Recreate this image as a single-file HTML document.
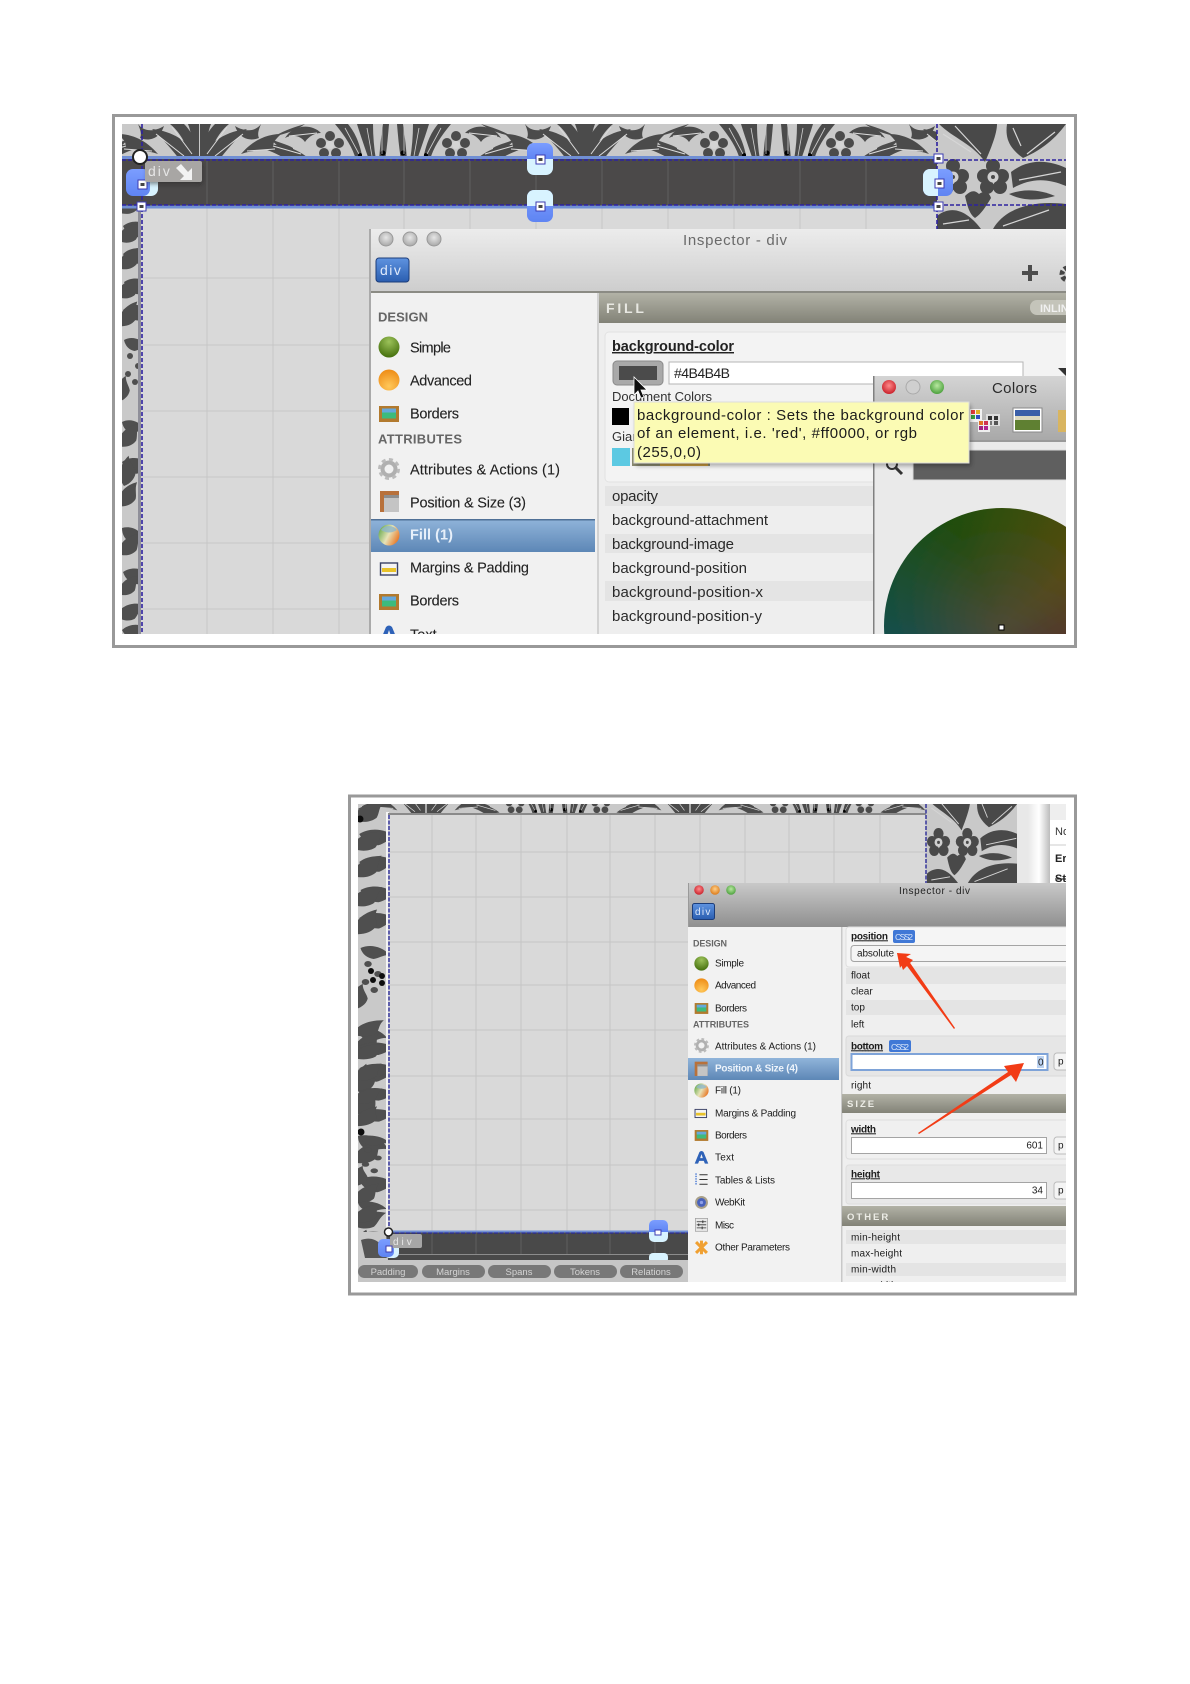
<!DOCTYPE html>
<html><head><meta charset="utf-8"><title>Inspector</title>
<style>
html,body{margin:0;padding:0;background:#fff;width:1190px;height:1684px;overflow:hidden}
svg{display:block;position:absolute;left:0;top:0}
text{font-family:"Liberation Sans",sans-serif;fill:#1c1c1c}
.s{font-size:14.5px;fill:#222;stroke:#222;stroke-width:.1px;transform:translateY(-1.5px)}
.h{font-size:13px;font-weight:bold;fill:#666;transform:translateY(-1.5px)}
.r{font-size:15px;fill:#2a2a2a;transform:translateY(-1px)}
.t{font-size:10px;fill:#1c1c1c;transform:translateY(-.7px)}
.th{font-size:9px;font-weight:bold;fill:#666;transform:translateY(-.7px)}
.u{text-decoration:underline;font-weight:bold}
</style></head><body>
<svg width="1190" height="1684" viewBox="0 0 1190 1684" xmlns="http://www.w3.org/2000/svg">
<defs>
<filter id="bl" x="0" y="0" width="100%" height="100%"><feGaussianBlur stdDeviation="0.38"/></filter>
<filter id="sh" x="-10%" y="-20%" width="120%" height="150%"><feGaussianBlur stdDeviation="2"/></filter>
<clipPath id="c1"><rect x="122" y="124" width="944" height="510"/></clipPath>
<clipPath id="c2"><rect x="358" y="804" width="708" height="478"/></clipPath>
<clipPath id="ins2"><rect x="688" y="883" width="378" height="399"/></clipPath>
<clipPath id="rd1"><rect x="937" y="124" width="129" height="105"/></clipPath>
<clipPath id="rd2"><rect x="927" y="804" width="90" height="80"/></clipPath>
<linearGradient id="tb1" x1="0" y1="0" x2="0" y2="1"><stop offset="0" stop-color="#ececec"/><stop offset="1" stop-color="#cdcdcd"/></linearGradient>
<linearGradient id="tb2" x1="0" y1="0" x2="0" y2="1"><stop offset="0" stop-color="#c9c9c9"/><stop offset="1" stop-color="#8f8f8f"/></linearGradient>
<linearGradient id="hd" x1="0" y1="0" x2="0" y2="1"><stop offset="0" stop-color="#b2b2a6"/><stop offset="1" stop-color="#828277"/></linearGradient>
<linearGradient id="sel" x1="0" y1="0" x2="0" y2="1"><stop offset="0" stop-color="#90b4da"/><stop offset="1" stop-color="#5d87b6"/></linearGradient>
<linearGradient id="btn" x1="0" y1="0" x2="0" y2="1"><stop offset="0" stop-color="#5f93e0"/><stop offset="1" stop-color="#2a5eb0"/></linearGradient>
<linearGradient id="hb" x1="0" y1="0" x2="0" y2="1"><stop offset="0" stop-color="#7b9dff"/><stop offset="1" stop-color="#5f84f2"/></linearGradient>
<linearGradient id="col" x1="0" y1="0" x2="0" y2="1"><stop offset="0" stop-color="#d4d4d4"/><stop offset="1" stop-color="#a8a8a8"/></linearGradient>
<linearGradient id="sc" x1="0" y1="0" x2="1" y2="0"><stop offset="0" stop-color="#e8e8e8"/><stop offset=".5" stop-color="#ffffff"/><stop offset="1" stop-color="#bcbcbc"/></linearGradient>
<radialGradient id="gb" cx=".5" cy=".25" r=".8"><stop offset="0" stop-color="#9cc25a"/><stop offset="1" stop-color="#3f6a08"/></radialGradient>
<radialGradient id="ob" cx=".5" cy=".8" r=".8"><stop offset="0" stop-color="#ffc85a"/><stop offset="1" stop-color="#ee8c16"/></radialGradient>
<linearGradient id="fb" x1="0" y1=".2" x2="1" y2=".7"><stop offset="0" stop-color="#63a84a"/><stop offset=".5" stop-color="#e7e3b8"/><stop offset="1" stop-color="#e8721e"/></linearGradient>
<radialGradient id="rd" cx=".5" cy=".4" r=".6"><stop offset="0" stop-color="#ff8a8a"/><stop offset="1" stop-color="#c9202a"/></radialGradient>
<radialGradient id="or" cx=".5" cy=".4" r=".6"><stop offset="0" stop-color="#ffd08a"/><stop offset="1" stop-color="#dc7a18"/></radialGradient>
<radialGradient id="gr" cx=".5" cy=".4" r=".6"><stop offset="0" stop-color="#b8e8a0"/><stop offset="1" stop-color="#4ba03c"/></radialGradient>
<radialGradient id="gy" cx=".5" cy=".4" r=".6"><stop offset="0" stop-color="#e6e6e6"/><stop offset="1" stop-color="#a8a8a8"/></radialGradient>

<g id="half">
 <path d="M4,0C5,12 6,24 8,36L14,36C13,24 12,12 10,0Z"/>
 <path d="M20,0C20,12 19,24 17,36L24,36C28,24 33,10 36,0Z"/>
 <path d="M45,0C37,10 33,20 30,36L37,36C40,24 48,12 58,0Z"/>
 <path d="M72,9C82,-1 100,1 108,14C100,10 92,12 88,18C84,12 78,9 72,9Z"/>
 <path d="M86,33C102,21 118,19 136,22C124,27 116,29 106,36Z"/>
 <path d="M100,24C106,20 114,19 122,15C116,23 108,27 100,28Z"/>
 <path d="M88,0C98,3 108,6 118,12C108,10 98,7 88,0Z"/>
 <path d="M132,0C138,8 148,8 158,2C154,14 144,18 134,14C136,10 134,5 132,0Z"/>
 <path d="M112,10C126,10 140,16 152,30C140,26 128,26 118,24C122,20 118,16 112,10Z"/>
 <path d="M193,36C186,22 172,8 146,5C158,16 168,28 174,36Z"/>
 <path d="M193,36C192,22 188,10 178,0L164,0C176,10 182,24 184,36Z"/>
 <path d="M193,0L193,36L187,36C187,22 186,10 182,0Z"/>
 <circle cx="63" cy="12" r="5"/><circle cx="54" cy="19" r="5"/><circle cx="72" cy="19" r="5"/><circle cx="57" cy="29" r="5"/><circle cx="69" cy="29" r="5"/>
 <circle cx="63" cy="21" r="4" fill="#d4d4d4"/>
 <circle cx="10" cy="29" r="2.500" fill="#000"/>
 <circle cx="33" cy="31" r="2" fill="#000"/>
 <path d="M150,10L178,32M166,3L186,30M118,25L146,27M92,30L120,22M76,9L104,12" stroke="#dcdcdc" stroke-width="1" fill="none"/>
 <path d="M11,2L11,30M26,4L21,32M48,4L34,30" stroke="#cfcfcf" stroke-width=".8" fill="none"/>
</g>
<g id="dm" fill="#4c4c4c"><use href="#half"/><use href="#half" transform="scale(-1,1)"/></g>
<path id="lf" d="M0,0C6,-9 18,-12 30,-6C24,-3 22,3 18,6C12,8 5,6 0,0Z"/>
<g id="strip" fill="#4f4f4f">
 <use href="#lf" transform="translate(-4,6) rotate(-25)"/><use href="#lf" transform="translate(1,20) rotate(18)"/>
 <use href="#lf" transform="translate(-5,34) rotate(-20)"/><use href="#lf" transform="translate(1,48) rotate(12)"/>
 <use href="#lf" transform="translate(-4,62) rotate(-30)"/><use href="#lf" transform="translate(2,76) rotate(22)"/>
 <use href="#lf" transform="translate(-6,90) rotate(-22)"/><use href="#lf" transform="translate(1,104) rotate(15)"/>
 <use href="#lf" transform="translate(-3,120) rotate(-42)"/><use href="#lf" transform="translate(2,134) rotate(28) scale(.8)"/>
 <circle cx="8" cy="150" r="3"/><circle cx="16" cy="160" r="3"/><circle cx="6" cy="168" r="3"/><circle cx="13" cy="176" r="3"/>
 <use href="#lf" transform="translate(-5,196) rotate(-60) scale(.9)"/><use href="#lf" transform="translate(0,216) rotate(30) scale(.8)"/>
 <use href="#lf" transform="translate(-4,240) rotate(-35)"/><use href="#lf" transform="translate(0,256) rotate(20)"/>
 <use href="#lf" transform="translate(2,280) rotate(-70)"/><use href="#lf" transform="translate(-4,300) rotate(-40)"/><use href="#lf" transform="translate(0,322) rotate(40) scale(.9)"/>
 <use href="#lf" transform="translate(-4,348) rotate(-30)"/><use href="#lf" transform="translate(1,366) rotate(22)"/>
 <use href="#lf" transform="translate(-4,388) rotate(-30) scale(.9)"/><use href="#lf" transform="translate(-6,410) rotate(-10)"/><use href="#lf" transform="translate(0,424) rotate(14)"/>
</g>
<g id="rdm" fill="#4a4a4a">
 <path d="M2,0C16,14 36,20 48,38C56,20 60,8 60,0Z"/>
 <path d="M70,0C68,14 72,24 86,34C100,28 116,18 129,0Z"/>
 <circle cx="16" cy="42" r="7"/><circle cx="7" cy="52" r="7"/><circle cx="25" cy="52" r="7"/><circle cx="10" cy="63" r="7"/><circle cx="23" cy="63" r="7"/><circle cx="16" cy="53" r="5.500" fill="#cfcfcf"/><circle cx="16" cy="53" r="2" fill="#4a4a4a"/>
 <circle cx="56" cy="42" r="7"/><circle cx="47" cy="52" r="7"/><circle cx="65" cy="52" r="7"/><circle cx="50" cy="63" r="7"/><circle cx="63" cy="63" r="7"/><circle cx="56" cy="53" r="5.500" fill="#cfcfcf"/><circle cx="56" cy="53" r="2" fill="#4a4a4a"/>
 <path d="M74,48C92,34 112,36 129,44V62C110,54 94,54 76,64Z"/>
 <path d="M28,72C34,66 38,66 42,70C48,66 52,68 54,74C48,84 44,90 38,94C32,90 30,80 28,72Z"/>
 <path d="M0,92C18,78 34,92 44,105H0Z"/><path d="M56,105C68,84 96,76 129,80V105Z"/>
 <path d="M72,70C88,64 104,66 118,72C104,76 88,78 72,70Z"/>
 <path d="M6,10L34,28M18,2L44,30M90,30L118,8M84,22L76,4M82,56L124,48M66,102L112,86M6,100L32,96" stroke="#d6d6d6" stroke-width="1.200" fill="none"/>
</g>

<g id="i-green"><circle cx="11" cy="11" r="10.500" fill="url(#gb)"/></g>
<g id="i-orange"><circle cx="11" cy="11" r="10.500" fill="url(#ob)"/></g>
<g id="i-frame"><rect x="1" y="3" width="20" height="16" fill="#b27a2e"/><rect x="4" y="5.500" width="14" height="10" fill="#3dbb7c"/><rect x="4" y="5.500" width="14" height="4" fill="#66a8dc"/></g>
<g id="i-gear"><circle cx="11" cy="11" r="6.500" fill="none" stroke="#b0b0b0" stroke-width="4"/><circle cx="11" cy="11" r="9.500" fill="none" stroke="#bbb" stroke-width="3" stroke-dasharray="4 3.400"/></g>
<g id="i-pos"><rect x="1" y="1" width="19" height="21" fill="#b8713a"/><rect x="5" y="5" width="15" height="17" fill="#c4c4c4"/><rect x="5" y="5" width="15" height="3" fill="#8e8e8e"/></g>
<g id="i-fill"><circle cx="11" cy="11" r="10.500" fill="url(#fb)"/><path d="M3,6A10,10 0 0 1 19,6Q11,11 3,6Z" fill="#8fb6c8" opacity=".8"/></g>
<g id="i-marg"><rect x="1.500" y="5" width="17" height="12" fill="#f4f4f4" stroke="#3b4266" stroke-width="1.400"/><rect x="3" y="10" width="14" height="4" fill="#e8c22a"/></g>
<g id="i-text"><path d="M1,20L8,3Q11,0 14,3L21,20L16,20L14.400,16L7.600,16L6,20ZM9,12L13,12L11,6Z" fill="#2f62b8" fill-rule="evenodd"/></g>
<g id="i-list"><path d="M8,4H20M8,11H20M8,18H20" stroke="#333" stroke-width="1.400"/><path d="M3,2V20" stroke="#5a86d8" stroke-width="2.400" stroke-dasharray="2 1.600"/></g>
<g id="i-web"><circle cx="11" cy="11" r="9.500" fill="#a9a089"/><circle cx="11" cy="11" r="6.500" fill="#4a62bc"/><circle cx="11" cy="11" r="2.400" fill="#8fa0e8"/></g>
<g id="i-misc"><rect x="2" y="2" width="18" height="19" fill="#e8e8e8" stroke="#9a9a9a"/><path d="M4,7H18M4,11.500H18M4,16H18" stroke="#333" stroke-width="1.200"/><path d="M13,5V9M7,9.500V13.500M12,14V18" stroke="#333" stroke-width="1.400"/></g>
<g id="i-other"><path d="M3,3L19,19M19,3L3,19M11,1V21" stroke="#f0a030" stroke-width="4.400"/></g>
<g id="h1"><rect x="0" y="0" width="9" height="9" fill="#fff" stroke="#3b3bb0" stroke-width="1"/><rect x="2.500" y="3" width="4" height="3" fill="#444"/></g>
</defs>

<!-- FRAME 1 -->
<rect x="113.500" y="115.500" width="962" height="531" fill="#fff" stroke="#999" stroke-width="3"/>
<g clip-path="url(#c1)"><g filter="url(#bl)">
 <rect x="122" y="124" width="944" height="510" fill="#c9c9c9"/>
 <use href="#dm" transform="translate(393,124)"/>
 <use href="#dm" transform="translate(777,124)"/>
 <use href="#dm" transform="translate(6,124)"/>
 <rect x="937" y="124" width="129" height="105" fill="#c9c9c9"/>
 <g clip-path="url(#rd1)"><use href="#rdm" transform="translate(937,124)"/></g>
 <use href="#strip" transform="translate(122,206)"/>
 <rect x="138" y="206" width="4" height="428" fill="#8f8f99"/>
 <rect x="141" y="206" width="796" height="428" fill="#d9d9d9"/>
 <path d="M141,278H937M141,345H937M141,411H937M141,477H937M141,543H937M141,609H937M207,206V634M273,206V634M339,206V634M404,206V634M470,206V634M536,206V634M602,206V634M668,206V634M734,206V634M800,206V634M866,206V634" stroke="#c6c6c6" stroke-width="1" fill="none"/>
 <rect x="122" y="158" width="815" height="48" fill="#4b4a49"/>
 <path d="M207,160V206M273,160V206M339,160V206M404,160V206M470,160V206M536,160V206M602,160V206M668,160V206M734,160V206M800,160V206M866,160V206" stroke="#5e5e5e" stroke-width="1"/>
 <path d="M122,157.500H937M122,207H937" stroke="#6f8fd4" stroke-width="3"/>
 <path d="M122,160H1066M122,205H1066M142,124V634M937,124V229" stroke="#2d20a0" stroke-width="1.600" stroke-dasharray="4 2" fill="none"/>
</g>
 <!-- handles -->
 <g filter="url(#bl)">
 <rect x="134" y="170" width="24" height="26" rx="7" fill="#d8f3ff"/>
 <rect x="126" y="169" width="24" height="27" rx="7" fill="url(#hb)"/>
 <rect x="527" y="143" width="26" height="32" rx="7" fill="#d8f3ff"/><path d="M527,150a7,7 0 0 1 7,-7h12a7,7 0 0 1 7,7v9h-26z" fill="url(#hb)"/>
 <rect x="527" y="190" width="26" height="32" rx="7" fill="url(#hb)"/><path d="M527,197a7,7 0 0 1 7,-7h12a7,7 0 0 1 7,7v9h-26z" fill="#d8f3ff"/>
 <rect x="923" y="169" width="30" height="27" rx="7" fill="url(#hb)"/><path d="M938,169h-8a7,7 0 0 0 -7,7v13a7,7 0 0 0 7,7h8z" fill="#d8f3ff"/>
 <use href="#h1" transform="translate(138,180)"/><use href="#h1" transform="translate(137,202)"/><use href="#h1" transform="translate(536,155)"/><use href="#h1" transform="translate(536,202)"/><use href="#h1" transform="translate(934,154)"/><use href="#h1" transform="translate(934,202)"/><use href="#h1" transform="translate(935,179)"/>
 <rect x="147" y="164" width="55" height="20" rx="2" fill="#222" opacity=".5" filter="url(#sh)"/>
 <rect x="145" y="161" width="57" height="21" rx="2" fill="#a8a6a4"/>
 <text x="148" y="176" style="font-size:14px;letter-spacing:2px;fill:#e6e6e6">div</text>
 <path d="M192,180L180,180L184,176L176,168L181,164L188,172L192,168Z" fill="#f2f2f2"/>
 <circle cx="140" cy="157" r="7" fill="#fff" stroke="#222" stroke-width="2"/>

 <!-- inspector -->
 <rect x="371" y="229" width="700" height="405" fill="#eeeeee"/>
 <rect x="371" y="229" width="700" height="63" fill="url(#tb1)"/>
 <rect x="369" y="229" width="2" height="405" fill="#aaa"/>
 <rect x="371" y="291" width="700" height="2" fill="#8b8b84"/>
 <circle cx="386" cy="239" r="7" fill="url(#gy)" stroke="#999"/><circle cx="410" cy="239" r="7" fill="url(#gy)" stroke="#999"/><circle cx="434" cy="239" r="7" fill="url(#gy)" stroke="#999"/>
 <rect x="376" y="258" width="33" height="24" rx="3" fill="url(#btn)" stroke="#1e3d7a"/>
 <text x="380" y="275" style="font-size:14px;letter-spacing:1.500px;fill:#dfe9fb">div</text>
 <text x="683" y="245" textLength="104" style="font-size:15px;fill:#6a6a6a">Inspector - div</text>
 <path d="M1022,273H1038M1030,265V281" stroke="#4e4e4e" stroke-width="4"/>
 <circle cx="1068" cy="274" r="6" fill="none" stroke="#444" stroke-width="5" stroke-dasharray="4 2"/>

 <rect x="371" y="293" width="226" height="341" fill="#f1f1f1"/>
 <rect x="597" y="293" width="2" height="341" fill="#d2d2d2"/>
 <rect x="599" y="293" width="470" height="30" fill="url(#hd)"/>
 <text x="606" y="313" style="font-size:14px;font-weight:bold;letter-spacing:2.800px;fill:#e8e8e2">FILL</text>
 <rect x="1030" y="300" width="45" height="15" rx="7" fill="#c4c4ba"/>
 <text x="1040" y="312" style="font-size:11px;font-weight:bold;fill:#f0f0f0">INLINE</text>

 <text x="378" y="323" class="h" textLength="50">DESIGN</text>
 <use href="#i-green" transform="translate(378,336)"/><text x="410" y="354" class="s" textLength="41">Simple</text>
 <use href="#i-orange" transform="translate(378,369)"/><text x="410" y="387" class="s" textLength="62">Advanced</text>
 <use href="#i-frame" transform="translate(378,403)"/><text x="410" y="420" class="s" textLength="49">Borders</text>
 <text x="378" y="445" class="h" textLength="84">ATTRIBUTES</text>
 <use href="#i-gear" transform="translate(378,458)"/><text x="410" y="476" class="s" textLength="150">Attributes &amp; Actions (1)</text>
 <use href="#i-pos" transform="translate(379,490)"/><text x="410" y="509" class="s" textLength="116">Position &amp; Size (3)</text>
 <rect x="371" y="519" width="224" height="33" fill="url(#sel)"/><rect x="371" y="519" width="224" height="1.500" fill="#4f6f96"/>
 <use href="#i-fill" transform="translate(378,524)"/><text x="410" y="541" class="s" style="font-weight:bold;fill:#e8f0fa;stroke:none" textLength="43">Fill (1)</text>
 <use href="#i-marg" transform="translate(379,558)"/><text x="410" y="574" class="s" textLength="119">Margins &amp; Padding</text>
 <use href="#i-frame" transform="translate(378,591)"/><text x="410" y="607" class="s" textLength="49">Borders</text>
 <use href="#i-text" transform="translate(378,624)"/><text x="410" y="641" class="s">Text</text>

 <!-- fill group -->
 <rect x="605" y="332" width="470" height="150" rx="4" fill="#f3f3f3" stroke="#e2e2e2"/>
 <text x="612" y="351" style="font-size:14.500px;fill:#222" class="u" textLength="122">background-color</text>
 <rect x="613" y="361" width="50" height="24" rx="4" fill="#a9a9a9" stroke="#8a8a8a"/>
 <rect x="619" y="366" width="38" height="14" fill="#4b4b4b"/>
 <rect x="669" y="362" width="354" height="22" fill="#fff" stroke="#b4b4b4"/>
 <text x="674" y="378" style="font-size:14px;fill:#222" textLength="56">#4B4B4B</text>
 <path d="M1058,368H1068L1068,378Z" fill="#333"/>
 <text x="612" y="401" style="font-size:13px;fill:#333" textLength="100">Document Colors</text>
 <rect x="612" y="408" width="17" height="17" fill="#000"/>
 <text x="612" y="441" style="font-size:13px;fill:#333">Gian</text>
 <rect x="612" y="448" width="18" height="18" fill="#5cc9e2"/>
 <rect x="632" y="448" width="78" height="18" fill="#8a8a70"/><rect x="660" y="458" width="48" height="8" fill="#c89a3c"/>

 <rect x="605" y="486" width="268" height="148" fill="#eeeeee"/>
 <rect x="605" y="486" width="268" height="20" fill="#e4e4e4"/>
 <rect x="605" y="534" width="268" height="19" fill="#e4e4e4"/>
 <rect x="605" y="581" width="268" height="20" fill="#e4e4e4"/>
 <text x="612" y="502" class="r" textLength="46">opacity</text>
 <text x="612" y="526" class="r" textLength="156">background-attachment</text>
 <text x="612" y="550" class="r" textLength="122">background-image</text>
 <text x="612" y="574" class="r" textLength="135">background-position</text>
 <text x="612" y="598" class="r" textLength="151">background-position-x</text>
 <text x="612" y="622" class="r" textLength="150">background-position-y</text>
 <text x="612" y="646" class="r">background-repeat</text>

 <!-- colors window -->
 <rect x="873" y="376" width="200" height="258" fill="#eaeaea"/>
 <rect x="873" y="376" width="200" height="65" fill="url(#col)"/>
 <rect x="873" y="440" width="200" height="2" fill="#999"/>
 <rect x="873" y="376" width="1.500" height="258" fill="#808080"/>
 <circle cx="889" cy="387" r="7" fill="url(#rd)"/><circle cx="913" cy="387" r="7" fill="#cfcfcf" stroke="#aaa"/><circle cx="937" cy="387" r="7" fill="url(#gr)"/>
 <text x="992" y="393" style="font-size:15px;fill:#2c2c2c" textLength="45">Colors</text>
 <rect x="970" y="409" width="12" height="13" fill="#f2f2f2"/>
 <rect x="971" y="410" width="4" height="4" fill="#e53b3b"/><rect x="976" y="410" width="4" height="4" fill="#e0b020"/><rect x="971" y="415" width="4" height="4" fill="#3aa040"/><rect x="976" y="415" width="4" height="4" fill="#3050c0"/>
 <rect x="986" y="414" width="14" height="12" fill="#ddd"/><rect x="988" y="416" width="4" height="4" fill="#333"/><rect x="994" y="416" width="4" height="4" fill="#333"/><rect x="988" y="421" width="4" height="4" fill="#777"/><rect x="994" y="421" width="4" height="4" fill="#555"/>
 <rect x="978" y="420" width="12" height="12" fill="#eee"/><rect x="979" y="421" width="4" height="4" fill="#e07020"/><rect x="984" y="421" width="4" height="4" fill="#d03050"/><rect x="979" y="426" width="4" height="4" fill="#a02080"/><rect x="984" y="426" width="4" height="4" fill="#b02090"/>
 <rect x="1013" y="408" width="29" height="24" fill="#fff" stroke="#888"/><rect x="1015" y="410" width="25" height="10" fill="#3a5fa8"/><rect x="1015" y="416" width="25" height="4" fill="#dcd8c0"/><rect x="1015" y="420" width="25" height="10" fill="#5f8030"/>
 <rect x="1058" y="410" width="12" height="22" fill="#d9b560"/>
 <rect x="913" y="450" width="155" height="30" fill="#5e5e5e" stroke="#dadada"/>
 <circle cx="892" cy="464" r="5" fill="none" stroke="#333" stroke-width="2"/><path d="M896,468L902,474" stroke="#333" stroke-width="3"/>
 <foreignObject x="884" y="508" width="236" height="236"><div xmlns="http://www.w3.org/1999/xhtml" style="width:236px;height:236px;border-radius:50%;background:radial-gradient(circle,#4c4a34 0%,rgba(76,74,52,.35) 55%,rgba(76,74,52,0) 100%),conic-gradient(#2a5000 0deg,#5c4c00 50deg,#5c3810 75deg,#5a2020 100deg,#4a2040 180deg,#003a5c 240deg,#00505a 258deg,#0a5030 295deg,#124e00 335deg,#2a5000 360deg)"></div></foreignObject>
 <rect x="999" y="625" width="5" height="5" fill="#fff" stroke="#000"/>

 <!-- tooltip -->
 <rect x="636" y="405" width="335" height="61" fill="#000" opacity=".3" filter="url(#sh)"/>
 <rect x="634" y="402" width="335" height="61" fill="#fbfbb4" stroke="#ddd"/>
 <text x="637" y="420" style="font-size:15px;fill:#1a1a1a" textLength="327">background-color : Sets the background color</text>
 <text x="637" y="438" style="font-size:15px;fill:#1a1a1a" textLength="280">of an element, i.e. 'red', #ff0000, or rgb</text>
 <text x="637" y="457" style="font-size:15px;fill:#1a1a1a" textLength="64">(255,0,0)</text>
 <path d="M634,377L634,395L638,391L641,398L644,397L641,390L647,390Z" fill="#111" stroke="#fff" stroke-width=".8"/>
 </g>
</g>

<!-- FRAME 2 -->
<rect x="349.500" y="796" width="726" height="498" fill="#fff" stroke="#999" stroke-width="3"/>
<g clip-path="url(#c2)"><g filter="url(#bl)">
 <rect x="358" y="804" width="708" height="478" fill="#c9c9c9"/>
 <use href="#dm" transform="translate(558,790) scale(.68)"/>
 <use href="#dm" transform="translate(822,790) scale(.68)"/>
 <use href="#dm" transform="translate(294,790) scale(.68)"/>
 <rect x="927" y="804" width="90" height="80" fill="#c9c9c9"/>
 <g clip-path="url(#rd2)"><use href="#rdm" transform="translate(927,800) scale(.72,.8)"/></g>
 <g transform="translate(358,814) scale(1.250,1)"><use href="#strip"/></g>
 <g transform="translate(358,1030) scale(1.250,.8)"><use href="#strip"/></g>
 <circle cx="360" cy="819" r="3.500" fill="#111"/><circle cx="361" cy="1132" r="3.500" fill="#111"/>
 <circle cx="371" cy="971" r="3" fill="#111"/><circle cx="373" cy="980" r="3" fill="#111"/><circle cx="382" cy="976" r="3" fill="#111"/><circle cx="382" cy="983" r="3" fill="#111"/>
 <rect x="386" y="812" width="3" height="420" fill="#f4f4f4"/>
 <rect x="388" y="815" width="538" height="417" fill="#d9d9d9"/>
 <rect x="388" y="813" width="538" height="2" fill="#8a8a8a"/>
 <path d="M388,852H926M388,897H926M388,942H926M388,985H926M388,1030H926M388,1076H926M388,1119H926M388,1165H926M388,1210H926M432,815V1232M476,815V1232M521,815V1232M567,815V1232M610,815V1232M655,815V1232M700,815V1232M745,815V1232M789,815V1232M834,815V1232M880,815V1232" stroke="#c5c5c5" stroke-width="1" fill="none"/>
 <path d="M389,815V1232M926,804V884" stroke="#2a2a98" stroke-width="1.400" stroke-dasharray="4 1.500" fill="none"/>
 <rect x="1017" y="804" width="11" height="80" fill="#e8e8e8"/>
 <rect x="1028" y="804" width="22" height="80" fill="url(#sc)"/>
 <rect x="1050" y="804" width="16" height="80" fill="#fff"/>
 <rect x="1050" y="804" width="16" height="16" fill="#eeeeee"/>
 <path d="M1050,845H1066" stroke="#ccc"/>
 <text x="1055" y="835" style="font-size:11px;fill:#333">No</text>
 <text x="1055" y="862" style="font-size:11px;font-weight:bold;fill:#222">Er</text>
 <text x="1055" y="882" style="font-size:11px;font-weight:bold;fill:#222;text-decoration:line-through">St</text>

 <!-- dark bar -->
 <rect x="358" y="1232" width="330" height="28" fill="#4a4a4a"/>
 <path d="M358,1254.500H688" stroke="#8c8c8c"/>
 <path d="M432,1233V1254M476,1233V1254M521,1233V1254M567,1233V1254M610,1233V1254M655,1233V1254" stroke="#5e5e5e"/>
 <path d="M389,1231.500H688" stroke="#6f8fd4" stroke-width="2"/>
 <path d="M362,1233H688" stroke="#2a2a98" stroke-dasharray="4 1.500" stroke-width="1.200"/>
 <path d="M358,1232L386,1232L388,1260H358Z" fill="#c9c9c9"/>
 <path d="M361,1240C372,1236 382,1240 388,1258L365,1258Z" fill="#555"/>
 <rect x="384" y="1240" width="15" height="18" rx="5" fill="#d8f3ff"/>
 <rect x="378" y="1239" width="16" height="18" rx="5" fill="url(#hb)"/>
 <rect x="390" y="1234" width="32" height="14" rx="2" fill="#a6a6a6"/>
 <text x="393" y="1245" style="font-size:10px;letter-spacing:3px;fill:#e8e8e8">div</text>
 <rect x="386" y="1246" width="6" height="6" fill="#fff" stroke="#3b3bb0"/>
 <circle cx="388.500" cy="1232" r="4" fill="#fff" stroke="#222" stroke-width="1.500"/>
 <rect x="649" y="1220" width="19" height="22" rx="5" fill="#d8f3ff"/><path d="M649,1225a5,5 0 0 1 5,-5h9a5,5 0 0 1 5,5v7h-19z" fill="url(#hb)"/>
 <rect x="655" y="1230" width="6" height="5" fill="#fff" stroke="#3b3bb0"/>
 <rect x="649" y="1253" width="19" height="10" rx="4" fill="#d8f3ff"/>
 <!-- tabs -->
 <rect x="358" y="1260" width="330" height="22" fill="#c6c6c6"/>
 <g fill="#787878">
  <rect x="358" y="1265" width="60" height="13" rx="6.500"/><rect x="422" y="1265" width="63" height="13" rx="6.500"/><rect x="488" y="1265" width="63" height="13" rx="6.500"/><rect x="554" y="1265" width="63" height="13" rx="6.500"/><rect x="620" y="1265" width="63" height="13" rx="6.500"/>
 </g>
 <g text-anchor="middle">
  <text x="388" y="1275" style="fill:#d4d4d4;font-size:9.500px">Padding</text><text x="453" y="1275" style="fill:#d4d4d4;font-size:9.500px">Margins</text><text x="519" y="1275" style="fill:#d4d4d4;font-size:9.500px">Spans</text><text x="585" y="1275" style="fill:#d4d4d4;font-size:9.500px">Tokens</text><text x="651" y="1275" style="fill:#d4d4d4;font-size:9.500px">Relations</text>
 </g>

 <!-- inspector 2 -->
 <g clip-path="url(#ins2)">
 <rect x="688" y="883" width="378" height="399" fill="#efefef"/>
 <rect x="688" y="883" width="378" height="44" fill="url(#tb2)"/>
 <rect x="688" y="883" width="1" height="399" fill="#9a9a9a"/>
 <circle cx="699" cy="890" r="4.800" fill="url(#rd)"/><circle cx="715" cy="890" r="4.800" fill="url(#or)"/><circle cx="731" cy="890" r="4.800" fill="url(#gr)"/>
 <rect x="692.500" y="903.500" width="22" height="16" rx="2" fill="url(#btn)" stroke="#1e3d7a"/>
 <text x="695" y="915" style="font-size:10px;letter-spacing:1.300px;fill:#dfe9fb">div</text>
 <text x="899" y="894" style="font-size:10px;fill:#222" textLength="71">Inspector - div</text>

 <rect x="688" y="927" width="153" height="355" fill="#f2f2f2"/>
 <rect x="841" y="927" width="1.500" height="355" fill="#c8c8c8"/>
 <text x="693" y="947" class="th" textLength="34">DESIGN</text>
 <g transform="translate(694,956) scale(.68)"><use href="#i-green"/></g><text x="715" y="967" class="t" textLength="29">Simple</text>
 <g transform="translate(694,978) scale(.68)"><use href="#i-orange"/></g><text x="715" y="989" class="t" textLength="41">Advanced</text>
 <g transform="translate(694,1001) scale(.68)"><use href="#i-frame"/></g><text x="715" y="1012" class="t" textLength="32">Borders</text>
 <text x="693" y="1028" class="th" textLength="56">ATTRIBUTES</text>
 <g transform="translate(694,1038) scale(.68)"><use href="#i-gear"/></g><text x="715" y="1050" class="t" textLength="101">Attributes &amp; Actions (1)</text>
 <rect x="688" y="1058" width="151" height="22" fill="url(#sel)"/>
 <g transform="translate(694,1061) scale(.68)"><use href="#i-pos"/></g><text x="715" y="1072" class="t" style="font-weight:bold;fill:#eef4fb" textLength="83">Position &amp; Size (4)</text>
 <g transform="translate(694,1083) scale(.68)"><use href="#i-fill"/></g><text x="715" y="1094" class="t" textLength="26">Fill (1)</text>
 <g transform="translate(694,1106) scale(.68)"><use href="#i-marg"/></g><text x="715" y="1117" class="t" textLength="81">Margins &amp; Padding</text>
 <g transform="translate(694,1128) scale(.68)"><use href="#i-frame"/></g><text x="715" y="1139" class="t" textLength="32">Borders</text>
 <g transform="translate(694,1150) scale(.68)"><use href="#i-text"/></g><text x="715" y="1161" class="t" textLength="19">Text</text>
 <g transform="translate(694,1172) scale(.68)"><use href="#i-list"/></g><text x="715" y="1184" class="t" textLength="60">Tables &amp; Lists</text>
 <g transform="translate(694,1195) scale(.68)"><use href="#i-web"/></g><text x="715" y="1206" class="t" textLength="30">WebKit</text>
 <g transform="translate(694,1217) scale(.68)"><use href="#i-misc"/></g><text x="715" y="1229" class="t" textLength="19">Misc</text>
 <g transform="translate(694,1240) scale(.68)"><use href="#i-other"/></g><text x="715" y="1251" class="t" textLength="75">Other Parameters</text>

 <rect x="846" y="927" width="225" height="40" rx="3" fill="#f5f5f5" stroke="#dedede"/>
 <text x="851" y="940" class="t u" textLength="37">position</text>
 <rect x="893" y="930" width="22" height="13" rx="2" fill="#3f78d6"/><text x="895" y="940" style="font-size:8.500px;fill:#dbe7fa" textLength="18">CSS2</text>
 <rect x="851" y="945.500" width="220" height="16" rx="3" fill="#f4f4f4" stroke="#a4a4a4"/>
 <text x="857" y="957" class="t" textLength="37">absolute</text>
 <rect x="846" y="968" width="225" height="16" fill="#e4e4e4"/><rect x="846" y="1000" width="225" height="15" fill="#e4e4e4"/>
 <text x="851" y="979" class="t">float</text><text x="851" y="995" class="t">clear</text><text x="851" y="1011" class="t">top</text><text x="851" y="1028" class="t">left</text>
 <rect x="846" y="1036" width="225" height="40" rx="3" fill="#e6e6e6" stroke="#dadada"/>
 <text x="851" y="1050" class="t u" textLength="32">bottom</text>
 <rect x="889" y="1040" width="22" height="12" rx="2" fill="#3f78d6"/><text x="891" y="1050" style="font-size:8.500px;fill:#dbe7fa" textLength="18">CSS2</text>
 <rect x="851.500" y="1054" width="196" height="16" fill="#fff" stroke="#7ea3d8" stroke-width="2"/>
 <rect x="1037" y="1056" width="7" height="12" fill="#bcd3f2"/><text x="1038" y="1066" class="t">0</text>
 <rect x="1054" y="1053" width="20" height="17" rx="3" fill="#f4f4f4" stroke="#bbb"/><text x="1058" y="1065" class="t">p</text>
 <text x="851" y="1089" class="t" textLength="20">right</text>
 <rect x="842" y="1094" width="230" height="19" fill="url(#hd)"/>
 <text x="847" y="1107" style="font-size:9.500px;font-weight:bold;letter-spacing:2px;fill:#ecece6">SIZE</text>
 <rect x="846" y="1120" width="225" height="39" rx="3" fill="#f0f0f0" stroke="#dedede"/>
 <text x="851" y="1133" class="t u" textLength="25">width</text>
 <rect x="851.500" y="1137.500" width="195" height="16" fill="#fff" stroke="#a4a4a4"/>
 <text x="1043" y="1149" class="t" text-anchor="end">601</text>
 <rect x="1054" y="1137" width="20" height="17" rx="3" fill="#f4f4f4" stroke="#bbb"/><text x="1058" y="1149" class="t">p</text>
 <rect x="846" y="1165" width="225" height="39" rx="3" fill="#e8e8e8" stroke="#dedede"/>
 <text x="851" y="1178" class="t u" textLength="29">height</text>
 <rect x="851.500" y="1182.500" width="195" height="16" fill="#fff" stroke="#a4a4a4"/>
 <text x="1043" y="1194" class="t" text-anchor="end">34</text>
 <rect x="1054" y="1182" width="20" height="17" rx="3" fill="#f4f4f4" stroke="#bbb"/><text x="1058" y="1194" class="t">p</text>
 <rect x="842" y="1206" width="230" height="20" fill="url(#hd)"/>
 <text x="847" y="1220" style="font-size:9.500px;font-weight:bold;letter-spacing:2px;fill:#ecece6">OTHER</text>
 <rect x="846" y="1230" width="225" height="14" fill="#e4e4e4"/><rect x="846" y="1263" width="225" height="13" fill="#e4e4e4"/>
 <text x="851" y="1241" class="t" textLength="49">min-height</text>
 <text x="851" y="1257" class="t" textLength="51">max-height</text>
 <text x="851" y="1273" class="t" textLength="45">min-width</text>
 <text x="851" y="1289" class="t">max-width</text>
 </g>
 </g>
 <!-- arrows -->
 <path d="M955,1028L906,957L911,954L897,953L900,968L904,962L954,1029Z" fill="#f23c16"/>
 <path d="M897,953L913,960L903,970Z" fill="#f23c16"/>
 <path d="M918,1133L1008,1072L1004,1066L1024,1063L1016,1082L1011,1075L919,1134Z" fill="#f23c16"/>
</g>
</svg>
</body></html>
